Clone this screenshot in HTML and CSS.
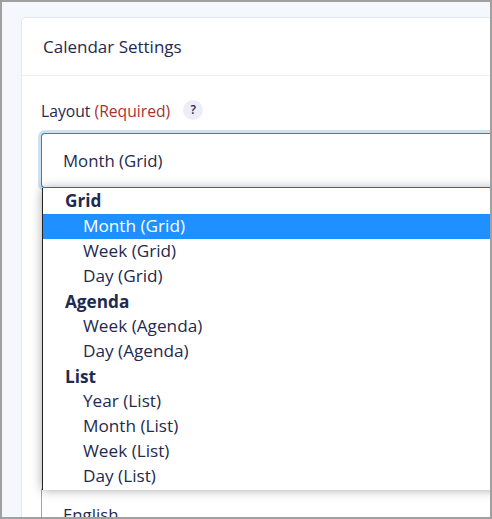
FILE: index.html
```html
<!DOCTYPE html>
<html lang="en">
<head>
  <meta charset="UTF-8" />
  <meta name="viewport" content="width=device-width, initial-scale=1.0"/>
  <title>Calendar Settings</title>
  <link rel="stylesheet" href="styles.css">
</head>
<body>
  <main class="window">
    <section class="card">
      <h3 class="card-head">Calendar Settings</h3>
      <div class="card-body">
        <div class="label-row">
          <label class="field-label">Layout <span class="required">(Required)</span></label>
          <span class="help">?</span>
        </div>
        <div class="select-wrap">
          <div class="select is-open">Month (Grid)</div>
          <ul class="dropdown">
            <li class="group">Grid</li>
            <li class="option selected">Month (Grid)</li>
            <li class="option">Week (Grid)</li>
            <li class="option">Day (Grid)</li>
            <li class="group">Agenda</li>
            <li class="option">Week (Agenda)</li>
            <li class="option">Day (Agenda)</li>
            <li class="group">List</li>
            <li class="option">Year (List)</li>
            <li class="option">Month (List)</li>
            <li class="option">Week (List)</li>
            <li class="option">Day (List)</li>
          </ul>
        </div>
        <div class="select lang">English</div>
      </div>
    </section>
  </main>
</body>
</html>
```

FILE: styles.css
```css
* {
  margin: 0;
  padding: 0;
  box-sizing: border-box;
}

html, body {
  height: 100%;
  overflow: hidden;
}

body {
  font-family: "Open Sans", "Noto Sans", sans-serif;
  color: #1e2a4f;
  background: #fff;
}

.window {
  height: 519px;
  padding: 15px 0 0 19px;
  background: #f4f8fc;
  border: 2px solid #a0a0a0;
  overflow: hidden;
}

.card {
  width: 520px;
  height: 600px;
  background: #fff;
  border: 1px solid #e3e8f2;
  border-radius: 4px;
}

.card-head {
  font-size: 17px;
  font-weight: 500;
  line-height: 22px;
  padding: 18px 21px 17px;
  border-bottom: 1px solid #eceef2;
}

.card-body {
  padding: 24px 19px 0;
}

.label-row {
  display: flex;
  align-items: center;
  gap: 13px;
  height: 22px;
  margin-bottom: 11px;
}

.field-label {
  font-size: 15.7px;
  font-weight: 500;
}

.required {
  color: #a8322f;
}

.help {
  width: 20px;
  height: 20px;
  margin-bottom: 2px;
  border-radius: 50%;
  background: #ecedf8;
  font-size: 12px;
  font-weight: 600;
  line-height: 20px;
  text-align: center;
}

.select-wrap {
  position: relative;
  margin-bottom: 299px;
}

.select {
  height: 55px;
  padding-left: 21px;
  font-size: 16.8px;
  line-height: 54px;
  border: 1px solid #a0a3ad;
  border-right: 0;
  border-radius: 4px 0 0 4px;
  background: #fff;
}

.select.is-open {
  border-color: #3c7fb5;
  box-shadow: 0 0 0 3px #cfe0f0;
}

.dropdown {
  position: absolute;
  top: 55px;
  left: 1px;
  width: 470px;
  height: 302px;
  list-style: none;
  background: #fff;
  border-left: 1px solid #222;
  box-shadow: 0 0 10px rgba(0, 0, 0, 0.35);
  font-size: 17.2px;
}

.group,
.option {
  height: 25px;
  line-height: 25px;
}

.group {
  padding-left: 22px;
  font-weight: 700;
}

.option {
  padding-left: 40px;
  line-height: 23px;
}

.group:first-child {
  height: 26px;
  line-height: 26px;
}

.option.selected {
  background: #1e90ff;
  color: #fff;
}
```
